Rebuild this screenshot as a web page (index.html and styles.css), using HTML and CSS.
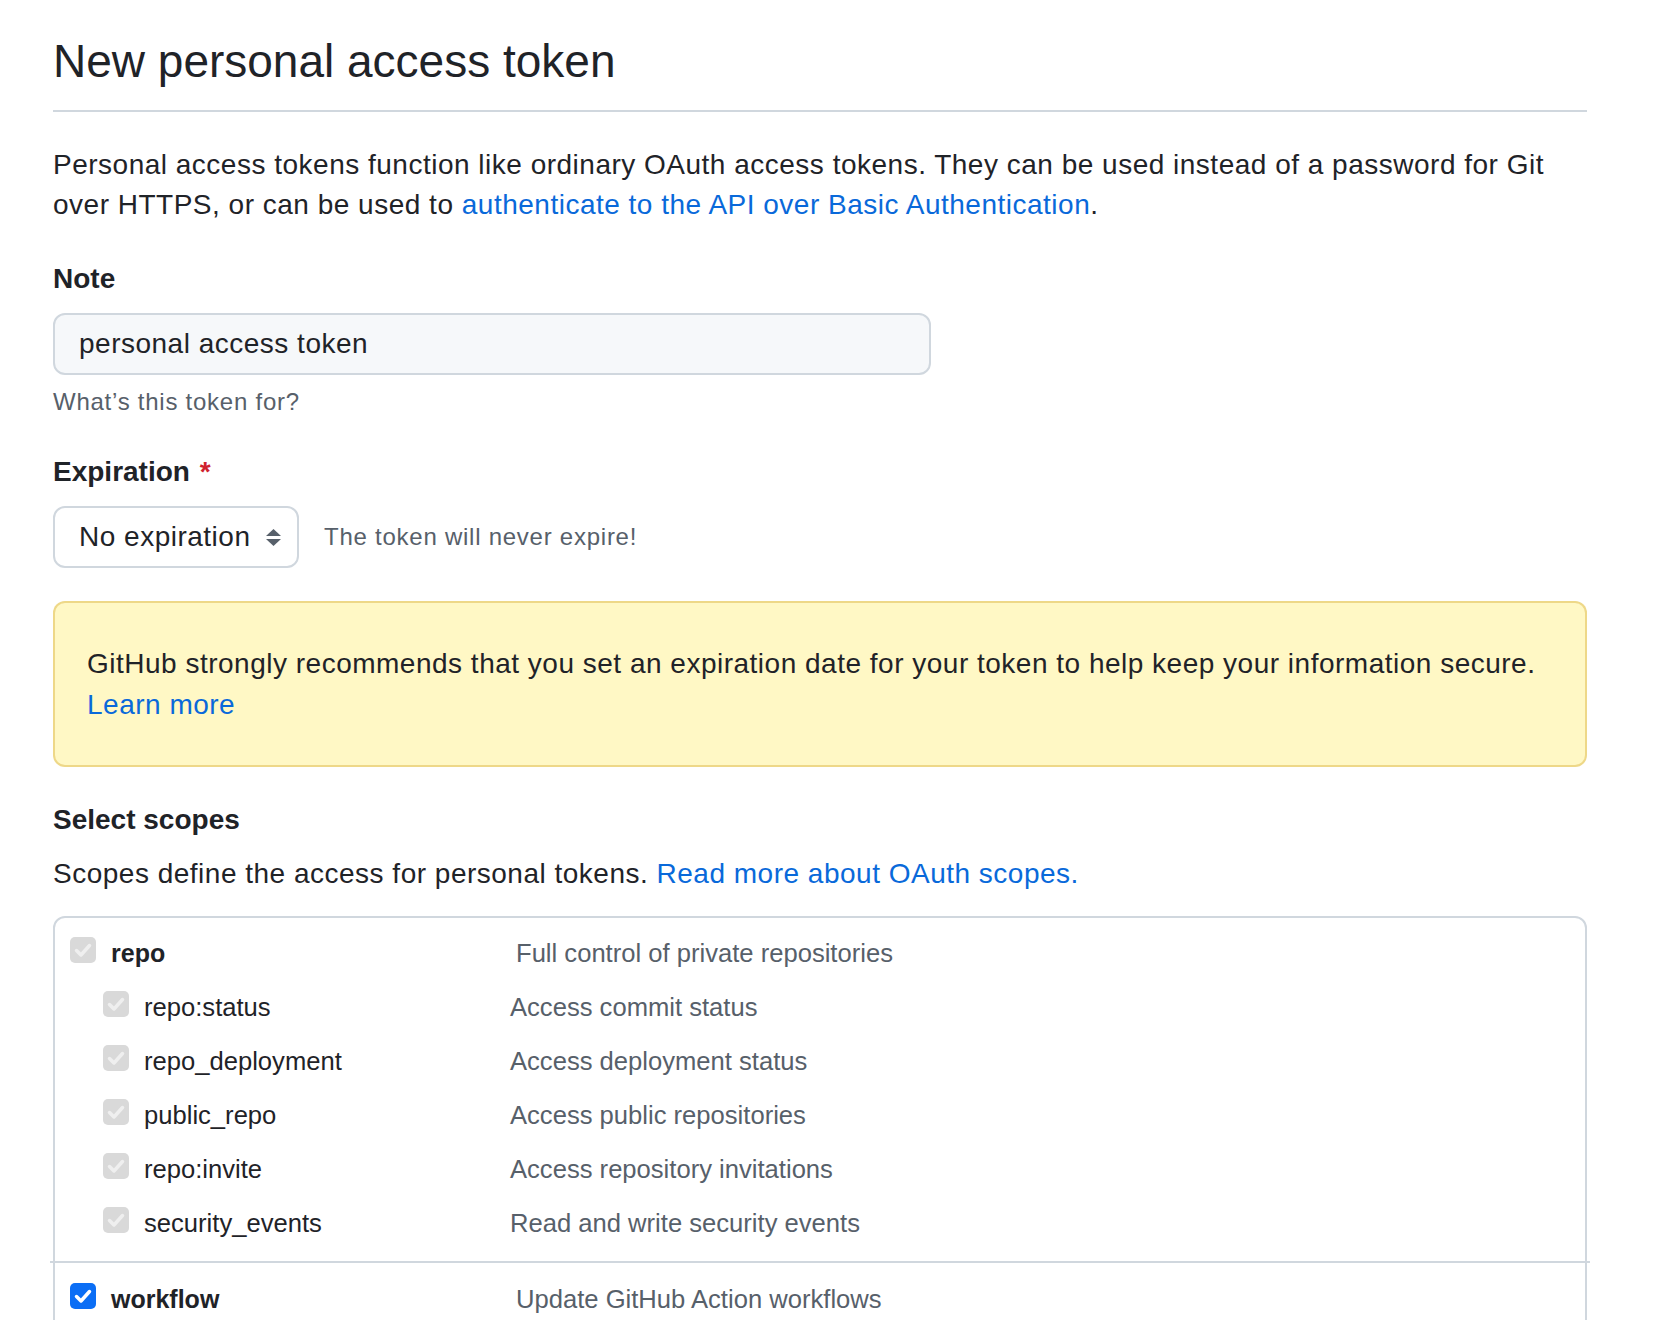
FILE: index.html
```html
<!DOCTYPE html>
<html lang="en">
<head>
  <meta charset="UTF-8">
  <title>New personal access token</title>
  <link rel="stylesheet" href="styles.css">
</head>
<body>
  <div class="page">
    <div class="subhead">
      <h2>New personal access token</h2>
    </div>

    <p class="intro">Personal access tokens function like ordinary OAuth access tokens. They can be used instead of a password for Git over HTTPS, or can be used to <a href="#">authenticate to the API over Basic Authentication</a>.</p>

    <div class="form-group">
      <label class="label" for="note">Note</label>
      <input id="note" class="input" value="personal access token">
      <p class="note">What’s this token for?</p>
    </div>

    <div class="form-group expiration">
      <label class="label">Expiration <span class="required">*</span></label>
      <div class="select-row">
        <div class="select">
          <span>No expiration</span>
          <svg class="arrows" width="15" height="17" viewBox="0 0 15 17"><polygon points="0,7 7.5,0 15,7" /><polygon points="0,10 15,10 7.5,17" /></svg>
        </div>
        <span class="select-note">The token will never expire!</span>
      </div>
    </div>

    <div class="flash">
      GitHub strongly recommends that you set an expiration date for your token to help keep your information secure.<br>
      <a href="#">Learn more</a>
    </div>

    <h3 class="scopes-title">Select scopes</h3>
    <p class="scopes-desc">Scopes define the access for personal tokens. <a href="#">Read more about OAuth scopes.</a></p>

    <div class="scope-box">
      <div class="scope-group">
        <div class="scope-row">
          <div class="scope-name top">
            <span class="check disabled"><svg viewBox="0 0 26 26"><path d="M6.5 13.5 L11 18 L19.5 8.5" /></svg></span>
            <b>repo</b>
          </div>
          <div class="scope-desc">Full control of private repositories</div>
        </div>
        <div class="scope-row sub">
          <div class="scope-name">
            <span class="check disabled"><svg viewBox="0 0 26 26"><path d="M6.5 13.5 L11 18 L19.5 8.5" /></svg></span>
            repo:status
          </div>
          <div class="scope-desc">Access commit status</div>
        </div>
        <div class="scope-row sub">
          <div class="scope-name">
            <span class="check disabled"><svg viewBox="0 0 26 26"><path d="M6.5 13.5 L11 18 L19.5 8.5" /></svg></span>
            repo_deployment
          </div>
          <div class="scope-desc">Access deployment status</div>
        </div>
        <div class="scope-row sub">
          <div class="scope-name">
            <span class="check disabled"><svg viewBox="0 0 26 26"><path d="M6.5 13.5 L11 18 L19.5 8.5" /></svg></span>
            public_repo
          </div>
          <div class="scope-desc">Access public repositories</div>
        </div>
        <div class="scope-row sub">
          <div class="scope-name">
            <span class="check disabled"><svg viewBox="0 0 26 26"><path d="M6.5 13.5 L11 18 L19.5 8.5" /></svg></span>
            repo:invite
          </div>
          <div class="scope-desc">Access repository invitations</div>
        </div>
        <div class="scope-row sub">
          <div class="scope-name">
            <span class="check disabled"><svg viewBox="0 0 26 26"><path d="M6.5 13.5 L11 18 L19.5 8.5" /></svg></span>
            security_events
          </div>
          <div class="scope-desc">Read and write security events</div>
        </div>
      </div>
      <div class="scope-group last">
        <div class="scope-row">
          <div class="scope-name top">
            <span class="check on"><svg viewBox="0 0 26 26"><path d="M6.5 13.5 L11 18 L19.5 8.5" /></svg></span>
            <b>workflow</b>
          </div>
          <div class="scope-desc">Update GitHub Action workflows</div>
        </div>
      </div>
    </div>
  </div>
</body>
</html>
```

FILE: styles.css
```css
body { margin: 0; font-family: "Liberation Sans", Arial, sans-serif; font-size: 28px; line-height: 40px; letter-spacing: 0.5px; color: #1f2328; background: #fff; }
a { color: #0969da; text-decoration: none; }
p { margin: 0; }

.page { padding: 31px 79px 0 53px; }

.subhead { border-bottom: 2px solid #d0d7de; padding-bottom: 19px; }
.subhead h2 { margin: 0; font-size: 46px; font-weight: 400; line-height: 60px; letter-spacing: 0; }

.intro { margin-top: 33px; }

.form-group { margin-top: 34px; }
.form-group.expiration { margin-top: 32px; }
.label { display: block; font-weight: 700; letter-spacing: 0; }
.required { color: #cf222e; margin-left: 2px; }

.input { display: block; box-sizing: border-box; margin-top: 14px; width: 878px; height: 62px; padding: 0 24px; border: 2px solid #d0d7de; border-radius: 12px; background: #f6f8fa; font: inherit; letter-spacing: inherit; color: #1f2328; outline: none; }
.note { margin-top: 9px; font-size: 24px; line-height: 36px; letter-spacing: 0.75px; color: #57606a; }

.select-row { display: flex; align-items: center; gap: 25px; margin-top: 14px; }
.select { box-sizing: border-box; width: 246px; height: 62px; padding: 0 16px 0 24px; display: flex; align-items: center; justify-content: space-between; border: 2px solid #d0d7de; border-radius: 12px; background: #fff; }
.arrows { fill: #57606a; }
.select-note { font-size: 24px; letter-spacing: 0.75px; color: #57606a; }

.flash { margin-top: 33px; padding: 40px 32px; line-height: 41px; background: #fff8c5; border: 2px solid rgba(212, 167, 44, 0.4); border-radius: 12px; }

.scopes-title { margin: 33px 0 0; font-size: 28px; line-height: 40px; letter-spacing: 0; }
.scopes-desc { margin-top: 14px; }

.scope-box { margin-top: 22px; padding-top: 8px; border: 2px solid #d0d7de; border-radius: 12px; font-size: 25.6px; letter-spacing: 0; }
.scope-group { margin: 0 -5px; padding: 0 5px 11px; border-bottom: 2px solid #d0d7de; }
.scope-group.last { padding-top: 9px; border-bottom: 0; }

.scope-row { display: flex; padding: 7px 0 7px 15px; }
.scope-row.sub { padding-left: 48px; }
.scope-name { display: flex; align-items: center; gap: 15px; width: 407px; flex-shrink: 0; }
.scope-name.top { width: 446px; }
.scope-name b { font-size: 25px; }
.scope-desc { color: #57606a; }

.check { display: block; width: 26px; height: 26px; margin-bottom: 6px; border-radius: 5px; flex-shrink: 0; }
.check svg { display: block; width: 26px; height: 26px; fill: none; stroke-width: 3.5; stroke-linecap: round; stroke-linejoin: round; }
.check.disabled { background: #d9d9d9; }
.check.disabled svg { stroke: #efefef; }
.check.on { background: #0b6ef5; }
.check.on svg { stroke: #fff; }
```
